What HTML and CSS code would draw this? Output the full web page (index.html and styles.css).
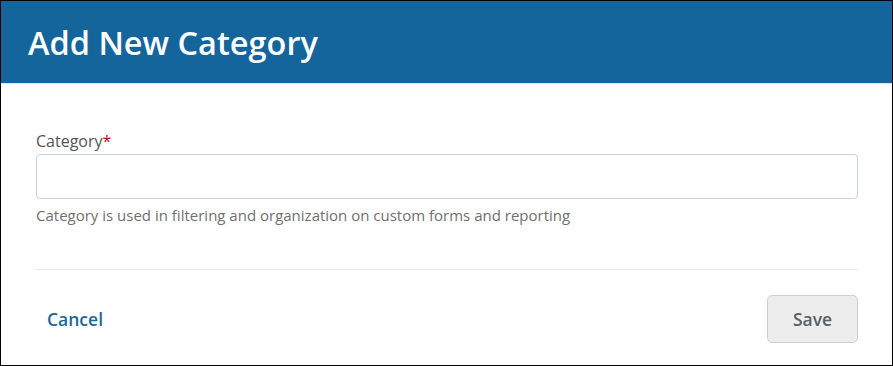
FILE: index.html
```html
<!DOCTYPE html>
<html lang="en">
<head>
  <meta charset="UTF-8" />
  <title>Add New Category</title>
  <link rel="stylesheet" href="styles.css">
</head>
<body>
  <div class="dialog">
    <div class="dialog-header">
      <h1>Add New Category</h1>
    </div>

    <div class="dialog-body">
      <label class="field-label" for="category">Category<span class="required">*</span></label>
      <input type="text" id="category" class="field-input" />
      <p class="field-help">Category is used in filtering and organization on custom forms and reporting</p>
    </div>

    <div class="dialog-footer">
      <a href="#" class="btn-cancel">Cancel</a>
      <button class="btn-save">Save</button>
    </div>
  </div>
</body>
</html>
```

FILE: styles.css
```css
* {
  box-sizing: border-box;
}
body {
  margin: 0;
  font-family: 'Open Sans', sans-serif;
  background-color: white;
}
.dialog {
  width: 893px;
  height: 366px;
  border: 1px solid #000;
  display: flex;
  flex-direction: column;
}
.dialog-header {
  height: 83px;
  background-color: #14659b;
  border-bottom: 1px solid #dde3ea;
  padding: 0 27px;
  display: flex;
  align-items: center;
}
.dialog-header h1 {
  margin: 0;
  color: white;
  font-size: 32.5px;
  font-weight: 600;
}
.dialog-body {
  padding: 47px 34px 0 35px;
  display: flex;
  flex-direction: column;
}
.field-label {
  font-size: 16px;
  color: #555;
  line-height: 21px;
  margin-bottom: 2px;
}
.required {
  color: #d0021b;
}
.field-input {
  height: 45px;
  border: 1px solid #ccd2d8;
  border-radius: 4px;
  font-family: inherit;
  font-size: 15px;
  padding: 0 10px;
}
.field-help {
  margin: 6px 0 0 0;
  font-size: 15px;
  color: #707070;
  line-height: 21px;
}
.dialog-footer {
  margin: 43px 34px 0 35px;
  border-top: 1px solid #e8e8e8;
  padding-top: 25px;
  display: flex;
  justify-content: space-between;
  align-items: center;
}
.btn-cancel {
  margin-left: 11px;
  color: #1d6898;
  font-size: 17.5px;
  font-weight: 600;
  text-decoration: none;
}
.btn-save {
  width: 91px;
  height: 48px;
  background-color: #ededed;
  border: 1px solid #cfcfcf;
  border-radius: 5px;
  font-family: inherit;
  font-size: 17.5px;
  font-weight: 600;
  color: #5a5f66;
}
```
